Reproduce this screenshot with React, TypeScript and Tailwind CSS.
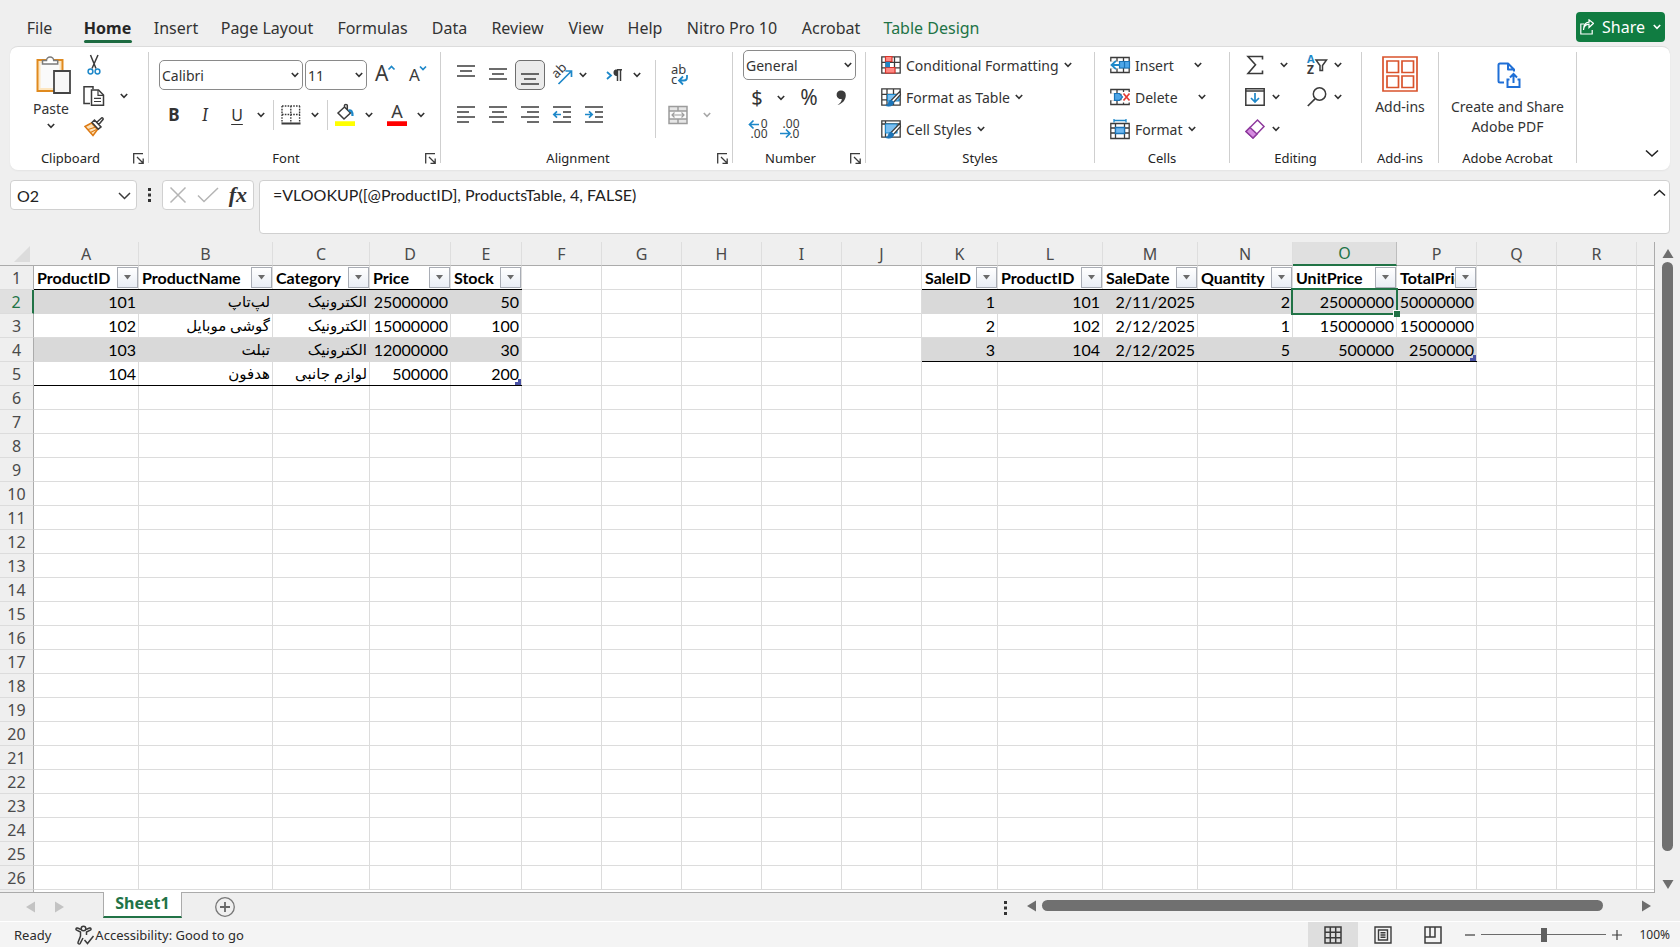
import { useState } from "react";
import type { ReactNode } from "react";
import clsx from "clsx";

const INK = "#3b3b3b";
const BLUE = "#1e88c9";

/* ---------- small building blocks ---------- */

function Icon({ w = 20, h = 20, children }: { w?: number; h?: number; children: ReactNode }) {
  return (
    <svg width={w} height={h} viewBox={`0 0 ${w} ${h}`} fill="none" stroke={INK} strokeWidth="1.5" className="shrink-0 overflow-visible" aria-hidden="true">
      {children}
    </svg>
  );
}

function Chev({ color = "#333" }: { color?: string }) {
  return (
    <svg width="8" height="6" viewBox="0 0 8 6" fill="none" stroke={color} strokeWidth="1.6" className="shrink-0" aria-hidden="true">
      <path d="M.8 1 4 4.3 7.2 1" />
    </svg>
  );
}

function Tool({ label, className, children }: { label: string; className?: string; children: ReactNode }) {
  return (
    <button aria-label={label} className={clsx("flex h-[30px] shrink-0 items-center justify-center", className ?? "w-8")}>
      {children}
    </button>
  );
}

function Divider({ className }: { className?: string }) {
  return <div className={clsx("w-px shrink-0 bg-[#cfcfcf]", className)} />;
}

function Group({ name, width, launcher, children }: { name: string; width: string; launcher?: boolean; children: ReactNode }) {
  return (
    <section aria-label={name} className={clsx("flex shrink-0", width)}>
      <div className="flex min-w-0 flex-1 flex-col pt-[3px]">
        <div className="h-[98px]">{children}</div>
        <div className="flex h-5 items-center">
          <span className="flex-1 text-center text-[13px] leading-5 text-[#242424]">{name}</span>
          {launcher && (
            <button aria-label={`${name} settings`} className="mr-[3px] flex w-[14px] justify-center">
              <Icon w={11} h={11}>
                <path d="M.7 10.5V.7H10M4 4l6 6M10.2 5.5v4.8H5.5" strokeWidth="1.3" />
              </Icon>
            </button>
          )}
        </div>
      </div>
      <Divider className="mt-[5px] h-[111px]" />
    </section>
  );
}

function Combo({ label, value, className }: { label: string; value: string; className: string }) {
  return (
    <div className={clsx("relative flex shrink-0 items-center", className)}>
      <select aria-label={label} defaultValue={value} className="h-[30px] w-full appearance-none rounded-[5px] border border-[#8a8a8a] bg-white pl-[2px] text-[14px] text-[#333]">
        <option>{value}</option>
      </select>
      <span className="pointer-events-none absolute right-1">
        <Chev />
      </span>
    </div>
  );
}

function Lines({ rows }: { rows: [number, number, number][] }) {
  return (
    <Icon w={20} h={20}>
      {rows.map(([x1, x2, y]) => (
        <path key={y} d={`M${x1} ${y}H${x2}`} />
      ))}
    </Icon>
  );
}

/* ---------- ribbon icons ---------- */

const PasteIcon = () => (
  <Icon w={36} h={40}>
    <path d="M2.5 5h25v31h-25z" fill="#fde6c0" stroke="#e08a1e" strokeWidth="2" />
    <path d="M5.5 8h19v25h-19z" fill="#fafafa" stroke="none" />
    <path d="M7.5 9V5.5h4a3.6 3.6 0 0 1 7.2 0h4V9z" fill="#fff" stroke="#7a7a7a" />
    <path d="M19 16h16v22H19z" fill="#f7f7f7" stroke="#444" strokeWidth="1.8" />
  </Icon>
);

const CutIcon = () => (
  <Icon>
    <path d="M6.5 0 12 13.5M14 0 8 13.5" />
    <circle cx="6.500" cy="16.5" r="2.400" stroke={BLUE} />
    <circle cx="13.5" cy="16.5" r="2.400" stroke={BLUE} />
  </Icon>
);

const CopyIcon = () => (
  <Icon w={22} h={20}>
    <path d="M7 17.5H1V.8h9v2.5" />
    <path d="M8.5 4h7l5 5v10.2h-12z" fill="#fff" />
    <path d="M15 4.3v5h5.3M11 12.3h7M11 15.5h7" strokeWidth="1.2" />
  </Icon>
);

const BrushIcon = () => (
  <Icon>
    <path d="M1 9.5 7.5 6l6 6.5L9 18.5z" fill="#fde2b8" stroke="#dd7a14" />
    <path d="M4 12.5 12 10M6.5 15.5l6-3" stroke="#dd7a14" strokeWidth="1.1" />
    <path d="M8 5.5 10.5 3l6.5 7-2.8 2.2zM12.5 5.5l5-4.5c1-.6 2.2.6 1.5 1.6L14.8 7.6" fill="#fff" />
  </Icon>
);

const BordersIcon = () => (
  <Icon>
    <path d="M1 1h18M1 9.5h18M1 1v17M9.8 1v17M18.6 1v17" strokeDasharray="1.6 1.2" strokeWidth="1.4" />
    <path d="M.5 18.5h19" strokeWidth="2" />
  </Icon>
);

const BucketIcon = () => (
  <Icon w={22} h={22}>
    <path d="m4 9 6.5-6 6 6-6.5 6zM10.5 3V1.2c0-1 2.8-1 2.8 0v4.3" />
    <path d="M14.5 6.5c2.8-.5 4 .6 4 5.5" stroke={BLUE} strokeWidth="2.2" />
    <path d="M1 17.3h20V22H1z" fill="#ff0" stroke="none" />
  </Icon>
);

const OrientIcon = () => (
  <Icon w={24} h={24}>
    <text x="0" y="0" transform="translate(6.500 16) rotate(-45)" fontSize="13" fontFamily="Noto Sans, sans-serif" fill={INK} stroke="none">ab</text>
    <path d="M8.500 21 21 8.500M15.500 8H21.500v6" stroke={BLUE} strokeWidth="1.7" />
  </Icon>
);

const WrapIcon = () => (
  <Icon w={20} h={22}>
    <text x="2" y="10" fontSize="13" fontFamily="Noto Sans, sans-serif" fill={INK} stroke="none">ab</text>
    <text x="2" y="20" fontSize="13" fontFamily="Noto Sans, sans-serif" fill={INK} stroke="none">c</text>
    <path d="M18 11v2.500c0 2-1 3-3 3H10.500M14 12.500l-4 4 4 4" stroke={BLUE} strokeWidth="1.800" />
  </Icon>
);

const MergeIcon = () => (
  <Icon>
    <path d="M1 1.500h18v17H1z" fill="#e6e6e6" stroke="none" />
    <path d="M2 6h16v8H2z" fill="#fafafa" stroke="none" />
    <path d="M1 1.500h18v17H1zM1 6h18M1 14h18M10 1.500V6M10 14v4.500" stroke="#9c9c9c" />
    <path d="M4 10h12M6.500 7.500 4 10l2.500 2.500M13.500 7.500 16 10l-2.500 2.500" stroke="#9c9c9c" strokeWidth="1.200" />
  </Icon>
);

function DecimalIcon({ increase }: { increase?: boolean }) {
  return (
    <Icon w={20} h={22}>
      <text x="19.500" y="10" textAnchor="end" fontSize="12" fontFamily="Noto Sans, sans-serif" fill={INK} stroke="none">{increase ? "0" : ".00"}</text>
      <text x="19.500" y="20" textAnchor="end" fontSize="12" fontFamily="Noto Sans, sans-serif" fill={INK} stroke="none">{increase ? ".00" : ".0"}</text>
      {increase ? (
        <path d="M11 6.500H1.500M5.500 2.500l-4 4 4 4" stroke={BLUE} strokeWidth="1.700" />
      ) : (
        <path d="M0 15.500h10M6 11.500l4 4-4 4" stroke={BLUE} strokeWidth="1.700" />
      )}
    </Icon>
  );
}

const CondFormatIcon = () => (
  <Icon>
    <path d="M.800 1.800h18.400v16.400H.800zM.800 7.300h18.400M.800 12.800h18.400M5 1.800v16.400M13.500 1.800v16.400" strokeWidth="1.300" />
    <path d="M4.500 1.500h6.500v5H4.500zM4.500 12.500h9.500v5.500H4.500z" fill="#ff8a84" stroke="#d7352c" strokeWidth="1.200" />
    <path d="M4.500 6.800h4.500v5.500H4.500z" fill={BLUE} stroke="none" />
  </Icon>
);

function TableBrushIcon({ frame }: { frame?: boolean }) {
  return (
    <Icon>
      {frame ? (
        <path d="M.800 1.800h18.400v16.400H.800zM.800 5h18.400M4.500 1.800v16.400" strokeWidth="1.300" />
      ) : (
        <path d="M.800 1.800h18.400v16.400H.800zM.800 7.300h18.400M.800 12.800h18.400M6 1.800v16.400M12.500 1.800v16.400" strokeWidth="1.300" />
      )}
      <path d={frame ? "M4.500 5H16v9H4.500z" : "M6.500 7.500H18V14H6.500z"} fill="#7cc0f2" stroke={BLUE} strokeWidth="1.100" />
      <path d="M18.800 4.500 10 13.500l2.200 2.200L19.500 7.500z" fill="#fff" strokeWidth="1.200" />
      <path d="M11 13.500c-3-.500-3.500 1.500-4 3.200-.300 1-1.200 1.500-2.500 1.700 3.500 1.600 8.500.600 8-3.400z" fill="#1b74b8" stroke="#1b74b8" strokeWidth=".8" />
    </Icon>
  );
}

const grid = "M.8 2.500h18.400v15H.8zM.8 7.500h18.400M.8 12.500h18.400M7 2.500v15M13.500 2.500v15";

const InsertCellsIcon = () => (
  <Icon>
    <path d={grid} strokeWidth="1.300" />
    <path d="M0 6.500h9v7H0z" fill="#fff" stroke="none" />
    <path d="M9.500 6.500h10v6.500h-10z" fill="#4ea6e8" stroke="#1b74b8" strokeWidth="1.200" />
    <path d="M14.500 6.500V13" stroke="#1b74b8" strokeWidth="1.200" />
    <path d="M10 10H1.500M6 5.800 1.500 10 6 14.200" stroke={BLUE} strokeWidth="1.800" />
  </Icon>
);

const DeleteCellsIcon = () => (
  <Icon>
    <path d={grid} strokeWidth="1.300" />
    <path d="M0 6.500h4.500v6.800H0zM11.500 5H20v10.500h-8.500z" fill="#fff" stroke="none" />
    <path d="M4.500 6.500h5l3 3.400-3 3.400h-5z" fill="#4ea6e8" stroke="#1b74b8" strokeWidth="1.200" />
    <path d="m13.500 6.500 6 7M19.500 6.500l-6 7" stroke="#e23b34" strokeWidth="1.700" />
  </Icon>
);

const FormatCellsIcon = () => (
  <Icon w={20} h={20}>
    <path d="M.800 4.500h18.400v15H.800zM.800 9h18.400M.800 14h18.400M5.500 4.500v15M14.500 4.500v15" strokeWidth="1.300" />
    <path d="M5.500 8.500h9v6h-9z" fill="#6fb8f0" stroke="#1b74b8" strokeWidth="1.300" />
    <path d="M4 1.500h12M4 0v3.500M16 0v3.500" stroke={BLUE} strokeWidth="1.300" />
  </Icon>
);

const SigmaIcon = () => (
  <Icon w={18} h={20}>
    <path d="M16.500 4.500V1.500H2l7.500 8.300L2 18.500h14.500v-3" strokeWidth="1.600" />
  </Icon>
);

const FillIcon = () => (
  <Icon>
    <path d="M.8 1.800h18.400v16.400H.8zM.8 4h18.400" strokeWidth="1.500" />
    <path d="M10 6v9M6 11l4 4 4-4" stroke={BLUE} strokeWidth="1.700" />
  </Icon>
);

const EraserIcon = () => (
  <Icon>
    <path d="M1 12.500 12.500 1 19 7.500 8 19z" fill="#fff" stroke="#8e3a9d" />
    <path d="M1 12.500 5 8.500l7 6.500L8 19z" fill="#d58be0" stroke="#8e3a9d" />
  </Icon>
);

const SortIcon = () => (
  <Icon w={22} h={22}>
    <text x="1" y="9" fontSize="11" fontWeight="700" fontFamily="Noto Sans, sans-serif" fill={BLUE} stroke="none">A</text>
    <text x="1" y="20" fontSize="12" fontWeight="700" fontFamily="Noto Sans, sans-serif" fill={INK} stroke="none">Z</text>
    <path d="M10 6h10.500l-4 5.500v5h-2.500v-5z" strokeWidth="1.500" />
  </Icon>
);

const SearchIcon = () => (
  <Icon>
    <circle cx="12.500" cy="7" r="6.200" />
    <path d="M8 11.800.8 19" strokeWidth="1.700" />
  </Icon>
);

const AddinsIcon = () => (
  <Icon w={36} h={36}>
    <path d="M1 1h34v34H1zM5 5h11.500v11.500H5zM20 5h11.500v11.500H20zM5 20h11.500v11.500H5zM20 20h11.500v11.500H20z" stroke="#d9532c" strokeWidth="1.700" />
  </Icon>
);

const PdfIcon = () => (
  <Icon w={26} h={28}>
    <path d="M9 21.500H5c-1 0-1.500-.500-1.500-1.500V4c0-1 .500-1.500 1.500-1.500h8l6 6v2M13 2.500v6h6" stroke="#1f6fd6" strokeWidth="2" strokeLinejoin="round" />
    <path d="M14.500 18.500h-2v7.500h12v-7.500h-2M18.500 22v-9M15 16.500l3.500-3.500 3.500 3.500" stroke="#1f6fd6" strokeWidth="2" />
  </Icon>
);

/* ---------- title tabs ---------- */

const TABS: [string, string][] = [
  ["File", "w-[65px]"],
  ["Home", "w-[71px]"],
  ["Insert", "w-[66px]"],
  ["Page Layout", "w-[116px]"],
  ["Formulas", "w-[95px]"],
  ["Data", "w-[59px]"],
  ["Review", "w-[77px]"],
  ["View", "w-[60px]"],
  ["Help", "w-[58px]"],
  ["Nitro Pro 10", "w-[116px]"],
  ["Acrobat", "w-[82px]"],
  ["Table Design", "w-[119px]"],
];

function TabBar() {
  return (
    <header className="flex h-[46px] items-start pt-3 pr-[15px] pl-[7px]">
      <nav className="flex flex-1">
        {TABS.map(([name, width]) => (
          <button
            key={name}
            className={clsx(
              "flex shrink-0 flex-col items-center pt-1 text-[16px] leading-6 whitespace-nowrap",
              width,
              name === "Home" && "font-bold text-[#262626]",
              name === "Table Design" && "text-[#217346]",
            )}
          >
            {name}
            {name === "Home" && <span className="h-[3px] w-12 rounded-sm bg-[#1d6b41]" />}
          </button>
        ))}
      </nav>
      <button className="flex h-[30px] w-[89px] items-center justify-center gap-2 rounded-[4px] bg-[#107c41] text-[16px] text-white">
        <svg width="14" height="16" viewBox="0 0 14 16" fill="none" stroke="#fff" strokeWidth="1.2" aria-hidden="true">
          <path d="M4 5H.8v10h11.400v-4M3.500 11c.3-4 2-5.700 5.500-5.800V8.500l4.500-4.200L9 .8v2.400C5 3.500 3.500 6.500 3.500 11z" />
        </svg>
        <span>Share</span>
        <Chev color="#fff" />
      </button>
    </header>
  );
}

/* ---------- ribbon ---------- */

function MenuRow({ icon, label, gap }: { icon: ReactNode; label: string; gap: string }) {
  return (
    <button className="flex h-[30px] items-center text-[14px] whitespace-nowrap">
      {icon}
      <span className={clsx("ml-[5px]", gap)}>{label}</span>
      <Chev />
    </button>
  );
}

function Ribbon() {
  return (
    <div className="mx-[10px] flex h-[124px] overflow-hidden rounded-lg border-t border-[#dcdcdc] bg-white shadow-xs">
      <Group name="Clipboard" width="w-[139px]" launcher>
        <div className="flex">
          <button className="ml-[11px] flex w-[60px] flex-col items-center pt-[5px] text-[14px]">
            <span className="pl-1">
              <PasteIcon />
            </span>
            <span className="mt-1 mb-1 leading-5">Paste</span>
            <Chev />
          </button>
          <div className="flex flex-col pl-px">
            <Tool label="Cut" className="w-6"><CutIcon /></Tool>
            <div className="my-px flex">
              <Tool label="Copy" className="w-6"><CopyIcon /></Tool>
              <Tool label="Copy options" className="w-9"><Chev /></Tool>
            </div>
            <Tool label="Format Painter" className="w-6"><BrushIcon /></Tool>
          </div>
        </div>
      </Group>

      <Group name="Font" width="w-[292px]" launcher>
        <div className="flex flex-col gap-[10px] pt-[10px] pl-[10px]">
          <div className="flex">
            <Combo label="Font name" value="Calibri" className="w-36" />
            <Combo label="Font size" value="11" className="ml-[2px] w-[62px]" />
            <Tool label="Increase font size">
              <Icon w={22} h={22}>
                <text x="3" y="17" fontSize="21" fontFamily="Noto Sans, sans-serif" fill={INK} stroke="none">A</text>
                <path d="m16.500 5.500 3-3 3 3" stroke={BLUE} strokeWidth="1.7" />
              </Icon>
            </Tool>
            <Tool label="Decrease font size">
              <Icon w={22} h={22}>
                <text x="5" y="17" fontSize="17" fontFamily="Noto Sans, sans-serif" fill={INK} stroke="none">A</text>
                <path d="m16 2.500 3 3 3-3" stroke={BLUE} strokeWidth="1.7" />
              </Icon>
            </Tool>
          </div>
          <div className="flex">
            <Tool label="Bold" className="w-[30px]"><span className="text-[17px] font-bold">B</span></Tool>
            <Tool label="Italic"><span className="font-serif text-[18px] italic">I</span></Tool>
            <Tool label="Underline"><span className="text-[16px] underline underline-offset-3">U</span></Tool>
            <Tool label="Underline options" className="w-4"><Chev /></Tool>
            <Divider className="mr-px ml-1 h-[30px]" />
            <Tool label="Borders"><BordersIcon /></Tool>
            <Tool label="Border options" className="w-4"><Chev /></Tool>
            <Divider className="mr-px ml-1 h-[30px]" />
            <Tool label="Fill color"><BucketIcon /></Tool>
            <Tool label="Fill color options" className="w-4"><Chev /></Tool>
            <Tool label="Font color" className="ml-1 w-8">
              <Icon w={22} h={22}>
                <text x="11" y="14" textAnchor="middle" fontSize="18" fontFamily="Noto Sans, sans-serif" fill={INK} stroke="none">A</text>
                <path d="M1 17.3h20V22H1z" fill="#f00" stroke="none" />
              </Icon>
            </Tool>
            <Tool label="Font color options" className="w-4"><Chev /></Tool>
          </div>
        </div>
      </Group>

      <Group name="Alignment" width="w-[292px]" launcher>
        <div className="flex pt-[10px] pl-[9px]">
          <div className="flex w-[205px] flex-col gap-[10px]">
            <div className="flex">
              <Tool label="Top align"><Lines rows={[[1, 19, 1], [4, 16, 6], [1, 19, 11]]} /></Tool>
              <Tool label="Middle align"><Lines rows={[[1, 19, 4], [4, 16, 9], [1, 19, 14]]} /></Tool>
              <Tool label="Bottom align" className="mx-px w-[30px] rounded-[5px] border border-[#6e6e6e] bg-[#ebebeb]"><Lines rows={[[1, 19, 9], [4, 16, 14], [1, 19, 19]]} /></Tool>
              <Tool label="Orientation"><OrientIcon /></Tool>
              <Tool label="Orientation options" className="w-[10px]"><Chev /></Tool>
              <Tool label="Text direction" className="ml-[10px] w-8">
                <Icon w={18} h={14}>
                  <path d="m2 4 4 3.500-4 3.500" stroke={BLUE} strokeWidth="1.800" />
                  <path d="M12 1.800h5M12.500 2v11M15.500 2v11" />
                  <path d="M12.500 1.500h-2C8 2 7.500 7 11 8h1.500z" fill={INK} stroke="none" />
                </Icon>
              </Tool>
              <Tool label="Text direction options" className="w-[14px]"><Chev /></Tool>
            </div>
            <div className="flex">
              <Tool label="Align left"><Lines rows={[[1, 19, 2], [1, 13, 7], [1, 19, 12], [1, 13, 17]]} /></Tool>
              <Tool label="Center"><Lines rows={[[1, 19, 2], [4, 16, 7], [1, 19, 12], [4, 16, 17]]} /></Tool>
              <Tool label="Align right"><Lines rows={[[1, 19, 2], [7, 19, 7], [1, 19, 12], [7, 19, 17]]} /></Tool>
              <Tool label="Decrease indent">
                <Icon>
                  <path d="M1 2h18M11 7h8M11 12h8M1 17h18" />
                  <path d="M9 9.500H2M5 6.300 1.800 9.500 5 12.700" stroke={BLUE} strokeWidth="1.700" />
                </Icon>
              </Tool>
              <Tool label="Increase indent">
                <Icon>
                  <path d="M1 2h18M11 7h8M11 12h8M1 17h18" />
                  <path d="M1 9.500h7M5 6.300l3.200 3.200L5 12.700" stroke={BLUE} strokeWidth="1.700" />
                </Icon>
              </Tool>
            </div>
          </div>
          <Divider className="h-[78px]" />
          <div className="ml-1 flex flex-col gap-[10px]">
            <Tool label="Wrap text" className="w-[38px]"><WrapIcon /></Tool>
            <div className="flex">
              <Tool label="Merge and center" className="w-9"><MergeIcon /></Tool>
              <Tool label="Merge options" className="w-[22px]"><Chev color="#a8a8a8" /></Tool>
            </div>
          </div>
        </div>
      </Group>

      <Group name="Number" width="w-[133px]" launcher>
        <div className="flex flex-col pl-[10px]">
          <Combo label="Number format" value="General" className="w-[113px]" />
          <div className="mt-[3px] flex">
            <Tool label="Accounting format" className="w-7"><span className="text-[20px]">$</span></Tool>
            <Tool label="Accounting options" className="w-5"><Chev /></Tool>
            <Tool label="Percent style" className="w-9"><span className="text-[21px]">%</span></Tool>
            <Tool label="Comma style" className="w-7">
              <Icon w={12} h={18}>
                <path d="M6 1.500a4.300 4.300 0 1 0 .8 8.500C6.500 12.800 5 14.500 2.500 16c5-1.300 8.300-5.200 8.300-9.800C10.800 3 8.800 1.500 6 1.500z" fill={INK} stroke="none" />
              </Icon>
            </Tool>
          </div>
          <div className="mt-px flex">
            <Tool label="Increase decimal" className="w-[30px]"><DecimalIcon increase /></Tool>
            <Tool label="Decrease decimal" className="w-[34px]"><DecimalIcon /></Tool>
          </div>
        </div>
      </Group>

      <Group name="Styles" width="w-[229px]">
        <div className="flex flex-col items-start gap-[2px] pl-[15px]">
          <MenuRow icon={<CondFormatIcon />} label="Conditional Formatting" gap="mr-[5px]" />
          <MenuRow icon={<TableBrushIcon />} label="Format as Table" gap="mr-[5px]" />
          <MenuRow icon={<TableBrushIcon frame />} label="Cell Styles" gap="mr-[5px]" />
        </div>
      </Group>

      <Group name="Cells" width="w-[135px]">
        <div className="flex flex-col items-start gap-[2px] pl-[15px]">
          <MenuRow icon={<InsertCellsIcon />} label="Insert" gap="mr-5" />
          <MenuRow icon={<DeleteCellsIcon />} label="Delete" gap="mr-5" />
          <MenuRow icon={<FormatCellsIcon />} label="Format" gap="mr-[5px]" />
        </div>
      </Group>

      <Group name="Editing" width="w-[132px]">
        <div className="flex pl-[9px]">
          <div className="flex w-[62px] flex-col gap-[2px]">
            <div className="flex">
              <Tool label="AutoSum"><SigmaIcon /></Tool>
              <Tool label="AutoSum options" className="ml-2 w-[10px]"><Chev /></Tool>
            </div>
            <div className="flex">
              <Tool label="Fill"><FillIcon /></Tool>
              <Tool label="Fill options" className="w-[10px]"><Chev /></Tool>
            </div>
            <div className="flex">
              <Tool label="Clear"><EraserIcon /></Tool>
              <Tool label="Clear options" className="w-[10px]"><Chev /></Tool>
            </div>
          </div>
          <div className="flex flex-col gap-[2px]">
            <div className="flex">
              <Tool label="Sort and filter"><SortIcon /></Tool>
              <Tool label="Sort options" className="w-[10px]"><Chev /></Tool>
            </div>
            <div className="flex">
              <Tool label="Find and select"><SearchIcon /></Tool>
              <Tool label="Find options" className="w-[10px]"><Chev /></Tool>
            </div>
          </div>
        </div>
      </Group>

      <Group name="Add-ins" width="w-[77px]">
        <button className="flex w-full flex-col items-center pt-[6px] text-[14px] leading-5">
          <AddinsIcon />
          <span className="mt-[5px]">Add-ins</span>
        </button>
      </Group>

      <Group name="Adobe Acrobat" width="w-[138px]">
        <button className="flex w-full flex-col items-center pt-[11px] text-[14px] leading-5">
          <PdfIcon />
          <span className="mt-2">
            Create and Share
            <br />
            Adobe PDF
          </span>
        </button>
      </Group>

      <div className="flex flex-1 items-end justify-end pr-[11px] pb-3">
        <button aria-label="Collapse ribbon">
          <Icon w={14} h={9}>
            <path d="m1 1.500 6 5.500 6-5.500" stroke="#222" strokeWidth="1.600" />
          </Icon>
        </button>
      </div>
    </div>
  );
}

/* ---------- formula bar ---------- */

function Dots() {
  return (
    <svg width="3" height="14" viewBox="0 0 3 14" fill="#333" className="shrink-0" aria-hidden="true">
      <path d="M0 0h3v3H0zM0 5.500h3v3H0zM0 11h3v3H0z" />
    </svg>
  );
}

function FormulaBar() {
  return (
    <div className="mx-[10px] mt-[10px] flex h-[54px] items-start">
      <div className="relative">
        <input aria-label="Name box" defaultValue="O2" className="h-[30px] w-[127px] rounded-[4px] border border-[#d0d0d0] bg-white pl-[6px] font-[Lato] text-[16px] text-[#222]" />
        <span className="pointer-events-none absolute top-[12px] right-[6px]">
          <Icon w={13} h={8}>
            <path d="m1 1 5.500 5.500L12 1" />
          </Icon>
        </span>
      </div>
      <div className="flex h-[30px] w-[25px] items-center justify-center">
        <Dots />
      </div>
      <div className="flex h-[30px] w-[92px] items-center justify-between rounded-[4px] border border-[#d0d0d0] bg-white px-[6px]">
        <button aria-label="Cancel">
          <Icon w={18} h={16}>
            <path d="m1.500.5 15 15M16.500.5l-15 15" stroke="#b5b5b5" />
          </Icon>
        </button>
        <button aria-label="Enter">
          <Icon w={22} h={16}>
            <path d="m1 8.500 6 6L21 1" stroke="#b5b5b5" />
          </Icon>
        </button>
        <button aria-label="Insert function" className="font-['Liberation_Serif',serif] text-[22px] leading-7 font-bold italic">
          fx
        </button>
      </div>
      <div className="relative ml-[5px] flex-1">
        <textarea
          aria-label="Formula"
          defaultValue="=VLOOKUP([@ProductID], ProductsTable, 4, FALSE)"
          className="block h-[54px] w-full resize-none rounded-[4px] border border-[#d0d0d0] bg-white pt-[2px] pl-[13px] font-[Lato] text-[16px] leading-6 text-[#222]"
        />
        <button aria-label="Collapse formula bar" className="absolute top-[9px] right-1">
          <Icon w={13} h={8}>
            <path d="m1 6.500 5.500-5 5.500 5" stroke="#222" />
          </Icon>
        </button>
      </div>
    </div>
  );
}

/* ---------- worksheet ---------- */

const COLS: [string, string][] = [
  ["A", "w-[105px]"],
  ["B", "w-[134px]"],
  ["C", "w-[97px]"],
  ["D", "w-[81px]"],
  ["E", "w-[71px]"],
  ["F", "w-20"],
  ["G", "w-20"],
  ["H", "w-20"],
  ["I", "w-20"],
  ["J", "w-20"],
  ["K", "w-[76px]"],
  ["L", "w-[105px]"],
  ["M", "w-[95px]"],
  ["N", "w-[95px]"],
  ["O", "w-[104px]"],
  ["P", "w-20"],
  ["Q", "w-20"],
  ["R", "w-20"],
];

// Two Excel tables side by side, each with a header row at row 1
const TABLES = [
  {
    start: 0,
    rows: [
      ["ProductID", "ProductName", "Category", "Price", "Stock"],
      ["101", "لپ‌تاپ", "الکترونیک", "25000000", "50"],
      ["102", "گوشی موبایل", "الکترونیک", "15000000", "100"],
      ["103", "تبلت", "الکترونیک", "12000000", "30"],
      ["104", "هدفون", "لوازم جانبی", "500000", "200"],
    ],
  },
  {
    start: 10,
    rows: [
      ["SaleID", "ProductID", "SaleDate", "Quantity", "UnitPrice", "TotalPrice"],
      ["1", "101", "2/11/2025", "2", "25000000", "50000000"],
      ["2", "102", "2/12/2025", "1", "15000000", "15000000"],
      ["3", "104", "2/12/2025", "5", "500000", "2500000"],
    ],
  },
];

const ROW_COUNT = 26;
const ACTIVE = { row: 2, col: "O" };

function FilterButton({ name }: { name: string }) {
  return (
    <button aria-label={`Filter ${name}`} className="absolute top-px right-0 flex h-[21px] w-[21px] items-center justify-center border border-[#a9adb5] bg-linear-to-b from-white to-[#e9edf4]">
      <svg width="7" height="5" viewBox="0 0 7 5" fill="#6a6a6a" aria-hidden="true">
        <path d="M0 0h7L3.500 4.500z" />
      </svg>
    </button>
  );
}

function Cell({ row, col }: { row: number; col: number }) {
  const table = TABLES.find((t) => col >= t.start && col < t.start + t.rows[0].length && row <= t.rows.length);
  if (!table) return <td className="border-r border-b border-[#dcdcdc]" />;

  const text = table.rows[row - 1][col - table.start];
  if (row === 1) {
    return (
      <td className="border-b border-black p-0">
        <div className="relative h-[23px] overflow-hidden border-r border-[#dcdcdc] pl-[3px] leading-[23px] font-bold whitespace-nowrap">
          {text}
          <FilterButton name={text} />
        </div>
      </td>
    );
  }

  const banded = row % 2 === 0;
  const last = row === table.rows.length;
  const lastCol = col === table.start + table.rows[0].length - 1;
  const active = row === ACTIVE.row && COLS[col][0] === ACTIVE.col;
  const persian = /[\u0600-\u06ff]/.test(text);
  return (
    <td className={clsx("border-b p-0", last ? "border-black" : banded ? "border-[#d9d9d9]" : "border-[#dcdcdc]")}>
      <div
        className={clsx(
          "relative h-[23px] border-r pr-[2px] text-right leading-[23px] whitespace-nowrap",
          banded ? "border-[#d9d9d9] bg-[#d9d9d9]" : "border-[#dcdcdc]",
          persian && "text-[15px]",
        )}
      >
        {text}
        {last && lastCol && (
          <svg width="6" height="6" viewBox="0 0 6 6" className="absolute right-0 bottom-0" fill="#4a53a6" aria-hidden="true">
            <path d="M3 0h3v6H0V3h3z" />
          </svg>
        )}
        {active && (
          <span className="absolute -inset-[2px] z-10 border-2 border-[#217346]">
            <span className="absolute -right-[4px] -bottom-[4px] h-[7px] w-[7px] border-t border-l border-white bg-[#217346]" />
          </span>
        )}
      </div>
    </td>
  );
}

function Sheet() {
  return (
    <div className="mt-2 flex flex-1">
      <div className="min-w-0 flex-1 border-r border-b border-[#ababab] bg-[linear-gradient(90deg,#efefef_33px,#ababab_33px,#ababab_34px,#fff_34px)]">
        <table className="w-full table-fixed border-separate border-spacing-0 font-[Lato,'DejaVu_Sans',sans-serif] text-[16px] text-black">
          <colgroup>
            <col className="w-[34px]" />
            {COLS.map(([name, width]) => (
              <col key={name} className={width} />
            ))}
            <col />
          </colgroup>
          <thead>
            <tr className="h-6 bg-[#efefef] font-['Noto_Sans',sans-serif] text-[#4a4a4a]">
              <td className="border-b border-[#ababab] p-0">
                <svg width="16" height="16" viewBox="0 0 16 16" fill="#dcdcdc" className="ml-[14px]" aria-hidden="true">
                  <path d="M16 0v16H0z" />
                </svg>
              </td>
              {COLS.map(([name]) => (
                <th
                  key={name}
                  scope="col"
                  className={clsx(
                    "border-r p-0 leading-[22px] font-normal",
                    name === ACTIVE.col
                      ? "border-b-2 border-r-[#bdbdbd] border-b-[#217346] bg-[#e0e0e0] text-[#217346]"
                      : "border-b border-r-[#dedede] border-b-[#ababab]",
                  )}
                >
                  {name}
                </th>
              ))}
              <td className="border-b border-[#ababab] p-0" />
            </tr>
          </thead>
          <tbody>
            {Array.from({ length: ROW_COUNT }, (_, i) => i + 1).map((row) => (
              <tr key={row} className="h-6">
                <th
                  scope="row"
                  className={clsx(
                    "border-b border-b-[#dcdcdc] px-0 pt-[2px] pb-0 font-['Noto_Sans',sans-serif] leading-[21px] font-normal",
                    row === ACTIVE.row
                      ? "border-r-2 border-r-[#217346] bg-[#e0e0e0] text-[#217346]"
                      : "border-r border-r-[#ababab] bg-[#efefef] text-[#4a4a4a]",
                  )}
                >
                  {row}
                </th>
                {COLS.map(([name], col) => (
                  <Cell key={name} row={row} col={col} />
                ))}
                <td className="border-b border-[#dcdcdc]" />
              </tr>
            ))}
          </tbody>
        </table>
      </div>
      <div className="flex w-[25px] flex-col items-center pt-[7px] pb-1">
        <svg width="12" height="9" viewBox="0 0 12 9" fill="#6e6e6e" aria-hidden="true">
          <path d="M6 0 11.500 9H.5z" />
        </svg>
        <div className="mt-1 mb-[29px] w-[11px] flex-1 rounded-full bg-[#707070]" />
        <svg width="12" height="9" viewBox="0 0 12 9" fill="#6e6e6e" aria-hidden="true">
          <path d="M.5 0h11L6 9z" />
        </svg>
      </div>
    </div>
  );
}

function Arrow({ right, color }: { right?: boolean; color: string }) {
  return (
    <svg width="9" height="12" viewBox="0 0 9 12" fill={color} className="shrink-0" aria-hidden="true">
      <path d={right ? "M0 .5 9 6 0 11.500z" : "M9 .5 0 6l9 5.500z"} />
    </svg>
  );
}

function SheetTabs() {
  return (
    <div className="flex h-[29px] border-b border-white">
      <div className="flex w-[103px] items-center gap-5 pl-[26px]">
        <button aria-label="Previous sheet"><Arrow color="#c3c3c3" /></button>
        <button aria-label="Next sheet"><Arrow right color="#c3c3c3" /></button>
      </div>
      <button className="-mt-px h-[26px] w-[79px] border-x border-b-2 border-x-[#ababab] border-b-[#217346] bg-white pb-[3px] text-[16px] leading-5 font-bold text-[#217346]">
        Sheet1
      </button>
      <button aria-label="New sheet" className="ml-8 flex items-center">
        <Icon w={22} h={22}>
          <circle cx="11" cy="11" r="9.300" stroke="#777" strokeWidth="1.300" />
          <path d="M11 6v10M6 11h10" stroke="#666" strokeWidth="1.800" />
        </Icon>
      </button>
      <div className="flex flex-1 items-center justify-end pr-[29px] pb-[3px]">
        <span className="pt-1"><Dots /></span>
        <span className="ml-5"><Arrow color="#6e6e6e" /></span>
        <div className="mx-[6px] h-[11px] w-[561px] rounded-full bg-[#707070]" />
        <span className="ml-[33px]"><Arrow right color="#6e6e6e" /></span>
      </div>
    </div>
  );
}

function StatusBar() {
  const [zoom, setZoom] = useState(100);
  return (
    <footer className="flex h-[25px] items-center bg-[#f4f4f4] pr-[10px] pl-[14px] text-[13px] leading-5 text-[#2b2b2b]">
      <span className="pt-px">Ready</span>
      <button className="ml-6 flex items-center">
        <Icon w={20} h={20}>
          <circle cx="8.500" cy="3.500" r="2.300" />
          <path d="M6 4.500 2.500 3c-1.500-.500-2.200 1.500-.800 2.200L5.500 7v4L3 17.500c-.300 1.400 1.500 2 2.200.800L8 13M11 4.500 14.500 3c1.500-.500 2.200 1.500.8 2.200L11.500 7v3M9.500 15l3 3.500L18.500 11" strokeWidth="1.500" />
        </Icon>
        <span className="pt-px">Accessibility: Good to go</span>
      </button>
      <div className="flex-1" />
      <button aria-label="Normal view" className="flex h-[25px] w-[50px] items-center justify-center bg-[#dedede]">
        <Icon w={18} h={18}>
          <path d="M1 1h16v16H1zM6.300 1v16M11.700 1v16M1 6.300h16M1 11.700h16" />
        </Icon>
      </button>
      <button aria-label="Page layout view" className="flex h-[25px] w-[50px] items-center justify-center">
        <Icon w={18} h={18}>
          <path d="M1 1h16v16H1zM4.500 4h9v10h-9zM6.500 6.700h5M6.500 9h5M6.500 11.300h5" strokeWidth="1.400" />
        </Icon>
      </button>
      <button aria-label="Page break view" className="flex h-[25px] w-[50px] items-center justify-center">
        <Icon w={18} h={18}>
          <path d="M1 1h16v16H1zM1 11h10V1M6 1v10" />
        </Icon>
      </button>
      <button aria-label="Zoom out" className="ml-[7px] flex w-[10px]">
        <Icon w={10} h={10}><path d="M0 5h10" strokeWidth="1.200" /></Icon>
      </button>
      <input
        type="range"
        aria-label="Zoom"
        min={0}
        max={200}
        value={zoom}
        onChange={(e) => setZoom(Number(e.target.value))}
        className="mx-[6px] h-4 w-[125px] appearance-none bg-[linear-gradient(#6b6b6b,#6b6b6b)] bg-[length:100%_1px] bg-center bg-no-repeat [&::-webkit-slider-thumb]:h-[14px] [&::-webkit-slider-thumb]:w-[6px] [&::-webkit-slider-thumb]:appearance-none [&::-webkit-slider-thumb]:bg-[#5f5f5f]"
      />
      <button aria-label="Zoom in" className="flex w-[10px]">
        <Icon w={10} h={10}><path d="M0 5h10M5 0v10" strokeWidth="1.200" /></Icon>
      </button>
      <span className="ml-3 w-9 pt-px text-right text-[12px]">{zoom}%</span>
    </footer>
  );
}

export default function App() {
  return (
    <div className="flex min-h-screen flex-col bg-[#efefef] font-['Noto_Sans',sans-serif] text-[#333]">
      <TabBar />
      <Ribbon />
      <FormulaBar />
      <Sheet />
      <SheetTabs />
      <StatusBar />
    </div>
  );
}
